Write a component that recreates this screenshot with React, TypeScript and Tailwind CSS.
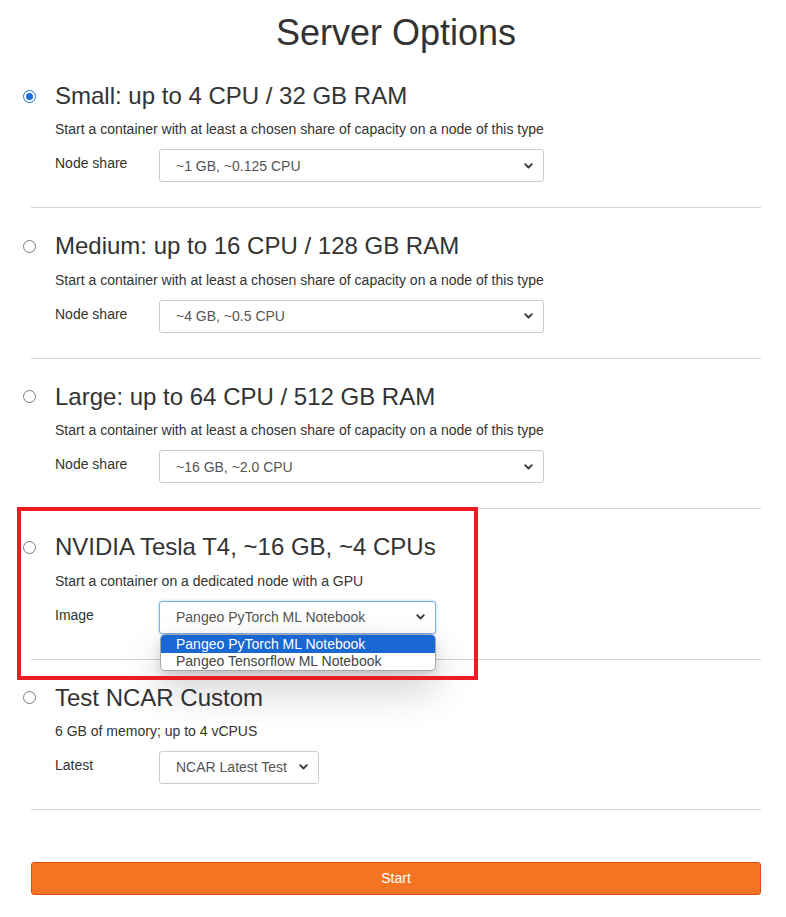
import React from "react";

const FONT = { fontFamily: '"Liberation Sans", Arial, Helvetica, sans-serif' };

function Chevron() {
  return (
    <svg width="9" height="6" viewBox="0 0 9 6" className="shrink-0">
      <path d="M1.2 1.2 L4.5 4.5 L7.8 1.2" fill="none" stroke="#3a3a3a" strokeWidth="1.9" strokeLinecap="round" strokeLinejoin="round" />
    </svg>
  );
}

function Radio({ checked }: { checked?: boolean }) {
  if (checked) {
    return (
      <span className="ml-[-8px] flex h-[13px] w-[13px] shrink-0 items-center justify-center rounded-full border-[1.5px] border-[#1a6fdc] bg-white">
        <span className="h-[7px] w-[7px] rounded-full bg-[#1a6fdc]" />
      </span>
    );
  }
  return <span className="ml-[-8px] block h-[13px] w-[13px] shrink-0 rounded-full border border-[#7a7a7a] bg-white" />;
}

function Select({
  value,
  widthClass,
  focused,
  children,
}: {
  value: string;
  widthClass: string;
  focused?: boolean;
  children?: React.ReactNode;
}) {
  return (
    <div className="relative">
      <div
        className={`${widthClass} flex h-[33px] items-center justify-between rounded-[3px] border bg-white pl-[16px] pr-[10px] text-[14px] text-[#555] ${
          focused ? "border-[#7db0e6] shadow-[0_0_3px_rgba(102,175,233,0.6)]" : "border-[#cccccc]"
        }`}
      >
        <span className="leading-[20px]">{value}</span>
        <Chevron />
      </div>
      {children}
    </div>
  );
}

function Section({
  title,
  desc,
  label,
  checked,
  select,
  first,
}: {
  title: string;
  desc: string;
  label: string;
  checked?: boolean;
  select: React.ReactNode;
  first?: boolean;
}) {
  return (
    <div className={first ? "pt-[30px]" : "pt-[25px]"}>
      <div className="flex h-[26.4px] items-center">
        <Radio checked={checked} />
        <h3 className="ml-[19px] text-[24px] leading-[26.4px] text-[#333]">{title}</h3>
      </div>
      <p className="mt-[10px] pl-[24px] text-[14px] leading-[20px] text-[#333]">{desc}</p>
      <div className="mt-[10px] flex pl-[24px]">
        <div className="w-[104px] pt-[4px] text-[14px] leading-[20px] text-[#333]">{label}</div>
        {select}
      </div>
      <div className="mt-[25px] h-px bg-[#d2d2d2]" />
    </div>
  );
}

export default function App() {
  const desc = "Start a container with at least a chosen share of capacity on a node of this type";
  return (
    <div className="relative min-h-[917px] w-[786px] bg-white" style={FONT}>
      <div className="ml-[31px] w-[730px] pt-[13px] pb-[23px]">
        <h1 className="h-[40px] text-center text-[36px] leading-[40px] text-[#333]">Server Options</h1>

        <Section
          first
          checked
          title="Small: up to 4 CPU / 32 GB RAM"
          desc={desc}
          label="Node share"
          select={<Select widthClass="w-[385px]" value="~1 GB, ~0.125 CPU" />}
        />
        <Section
          title="Medium: up to 16 CPU / 128 GB RAM"
          desc={desc}
          label="Node share"
          select={<Select widthClass="w-[385px]" value="~4 GB, ~0.5 CPU" />}
        />
        <Section
          title="Large: up to 64 CPU / 512 GB RAM"
          desc={desc}
          label="Node share"
          select={<Select widthClass="w-[385px]" value="~16 GB, ~2.0 CPU" />}
        />
        <Section
          title="NVIDIA Tesla T4, ~16 GB, ~4 CPUs"
          desc="Start a container on a dedicated node with a GPU"
          label="Image"
          select={
            <Select widthClass="w-[277px]" value="Pangeo PyTorch ML Notebook" focused>
              <div className="absolute left-px top-[33px] z-20 w-[276px] overflow-hidden rounded-[5px] border border-[#a6a6a6] bg-white text-[14px] shadow-[0_18px_40px_rgba(0,0,0,0.2),0_4px_10px_rgba(0,0,0,0.12)]">
                <div className="h-[18px] bg-[#1967d2] pl-[15px] leading-[18px] text-white">Pangeo PyTorch ML Notebook</div>
                <div className="h-[17px] pl-[15px] leading-[17px] text-[#444]">Pangeo Tensorflow ML Notebook</div>
              </div>
            </Select>
          }
        />
        <Section
          title="Test NCAR Custom"
          desc="6 GB of memory; up to 4 vCPUS"
          label="Latest"
          select={<Select widthClass="w-[160px]" value="NCAR Latest Test" />}
        />

        <button className="mt-[52px] flex h-[33px] w-full items-center justify-center rounded-[3px] border border-[#e34e0e] bg-[#f37524] text-[14px] text-white">
          Start
        </button>
      </div>

      <div className="pointer-events-none absolute left-[17px] top-[507px] z-30 h-[173px] w-[461px] border-[4px] border-[#ed1c24]" />
    </div>
  );
}
